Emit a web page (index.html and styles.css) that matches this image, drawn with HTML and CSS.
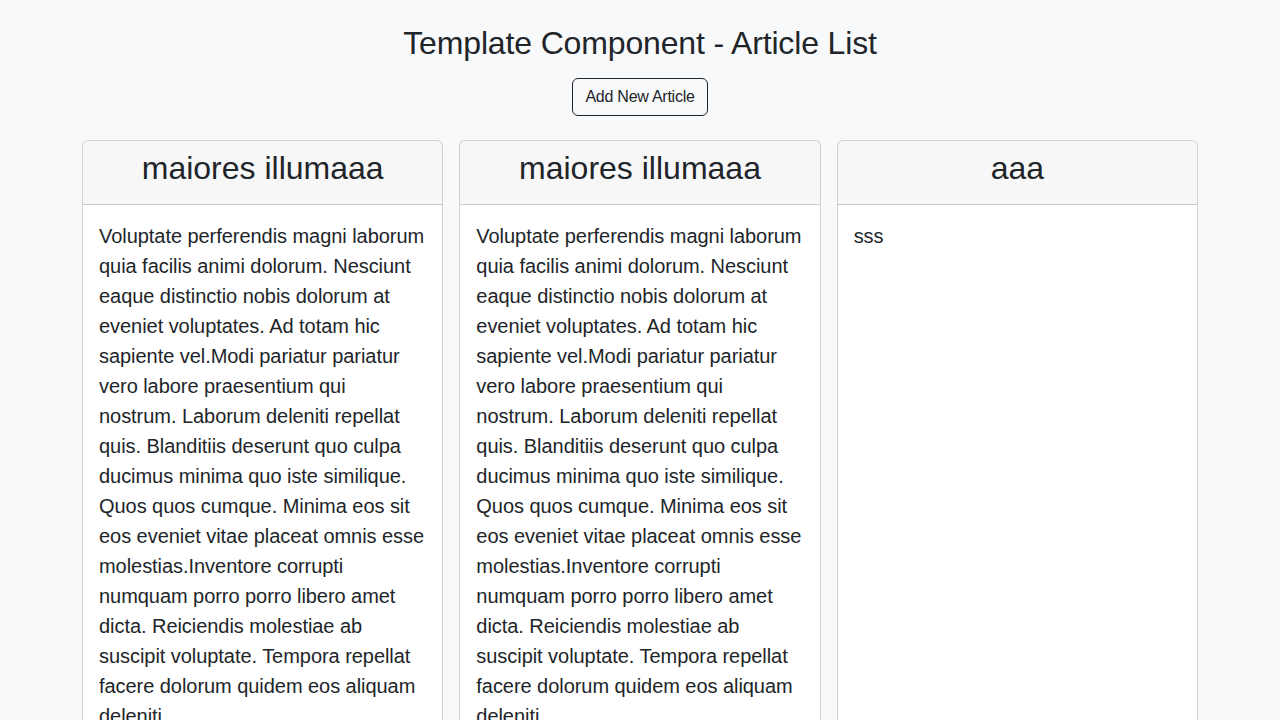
FILE: index.html
```html
<!DOCTYPE html>
<html lang="en">
<head>
<meta charset="utf-8">
<title>Template Component - Article List</title>
<link rel="stylesheet" href="styles.css">
</head>
<body>
<main class="container">
  <h2 class="page-title">Template Component - Article List</h2>
  <div class="actions">
    <button class="btn-outline" type="button">Add New Article</button>
  </div>
  <div class="grid">
    <article class="card">
      <div class="card-header"><h2 class="card-title">maiores illumaaa</h2></div>
      <div class="card-body">
        <p class="card-text">Voluptate perferendis magni laborum quia facilis animi dolorum. Nesciunt eaque distinctio nobis dolorum at eveniet voluptates. Ad totam hic sapiente vel.Modi pariatur pariatur vero labore praesentium qui nostrum. Laborum deleniti repellat quis. Blanditiis deserunt quo culpa ducimus minima quo iste similique. Quos quos cumque. Minima eos sit eos eveniet vitae placeat omnis esse molestias.Inventore corrupti numquam porro porro libero amet dicta. Reiciendis molestiae ab suscipit voluptate. Tempora repellat facere dolorum quidem eos aliquam deleniti.</p>
      </div>
    </article>
    <article class="card">
      <div class="card-header"><h2 class="card-title">maiores illumaaa</h2></div>
      <div class="card-body">
        <p class="card-text">Voluptate perferendis magni laborum quia facilis animi dolorum. Nesciunt eaque distinctio nobis dolorum at eveniet voluptates. Ad totam hic sapiente vel.Modi pariatur pariatur vero labore praesentium qui nostrum. Laborum deleniti repellat quis. Blanditiis deserunt quo culpa ducimus minima quo iste similique. Quos quos cumque. Minima eos sit eos eveniet vitae placeat omnis esse molestias.Inventore corrupti numquam porro porro libero amet dicta. Reiciendis molestiae ab suscipit voluptate. Tempora repellat facere dolorum quidem eos aliquam deleniti.</p>
      </div>
    </article>
    <article class="card">
      <div class="card-header"><h2 class="card-title">aaa</h2></div>
      <div class="card-body">
        <p class="card-text">sss</p>
      </div>
    </article>
  </div>
</main>
</body>
</html>
```
FILE: styles.css
```css
* { box-sizing: border-box; }
html, body { margin: 0; }
body {
  background: #f8f9fa;
  color: #212529;
  font-family: "Liberation Sans", Arial, sans-serif;
  font-size: 16px;
  line-height: 1.5;
}
.container {
  max-width: 1140px;
  margin: 0 auto;
  padding: 0 12px;
}
.page-title {
  margin: 24px 0 16px;
  font-size: 32px;
  font-weight: 400;
  line-height: 1.2;
  text-align: center;
  letter-spacing: -0.15px;
}
.actions {
  display: flex;
  justify-content: center;
  margin-bottom: 24px;
}
.btn-outline {
  font-family: inherit;
  font-size: 16px;
  line-height: 24px;
  letter-spacing: -0.25px;
  padding: 6px 12px;
  color: #212529;
  background: transparent;
  border: 1px solid #212529;
  border-radius: 6px;
}
.grid {
  display: grid;
  grid-template-columns: repeat(3, 1fr);
  gap: 16px;
}
.card {
  display: flex;
  flex-direction: column;
  background: #fff;
  border: 1px solid rgba(0, 0, 0, 0.175);
  border-radius: 6px;
  overflow: hidden;
}
.card-header {
  background: rgba(0, 0, 0, 0.03);
  border-bottom: 1px solid rgba(0, 0, 0, 0.175);
  padding: 8px 16px;
  text-align: center;
}
.card-title {
  margin: 0 0 8px;
  font-size: 32px;
  font-weight: 400;
  line-height: 1.2;
}
.card-body {
  flex: 1;
  padding: 16px;
}
.card-text {
  margin: 0;
  font-size: 20px;
  line-height: 30px;
  letter-spacing: -0.05px;
}
```
